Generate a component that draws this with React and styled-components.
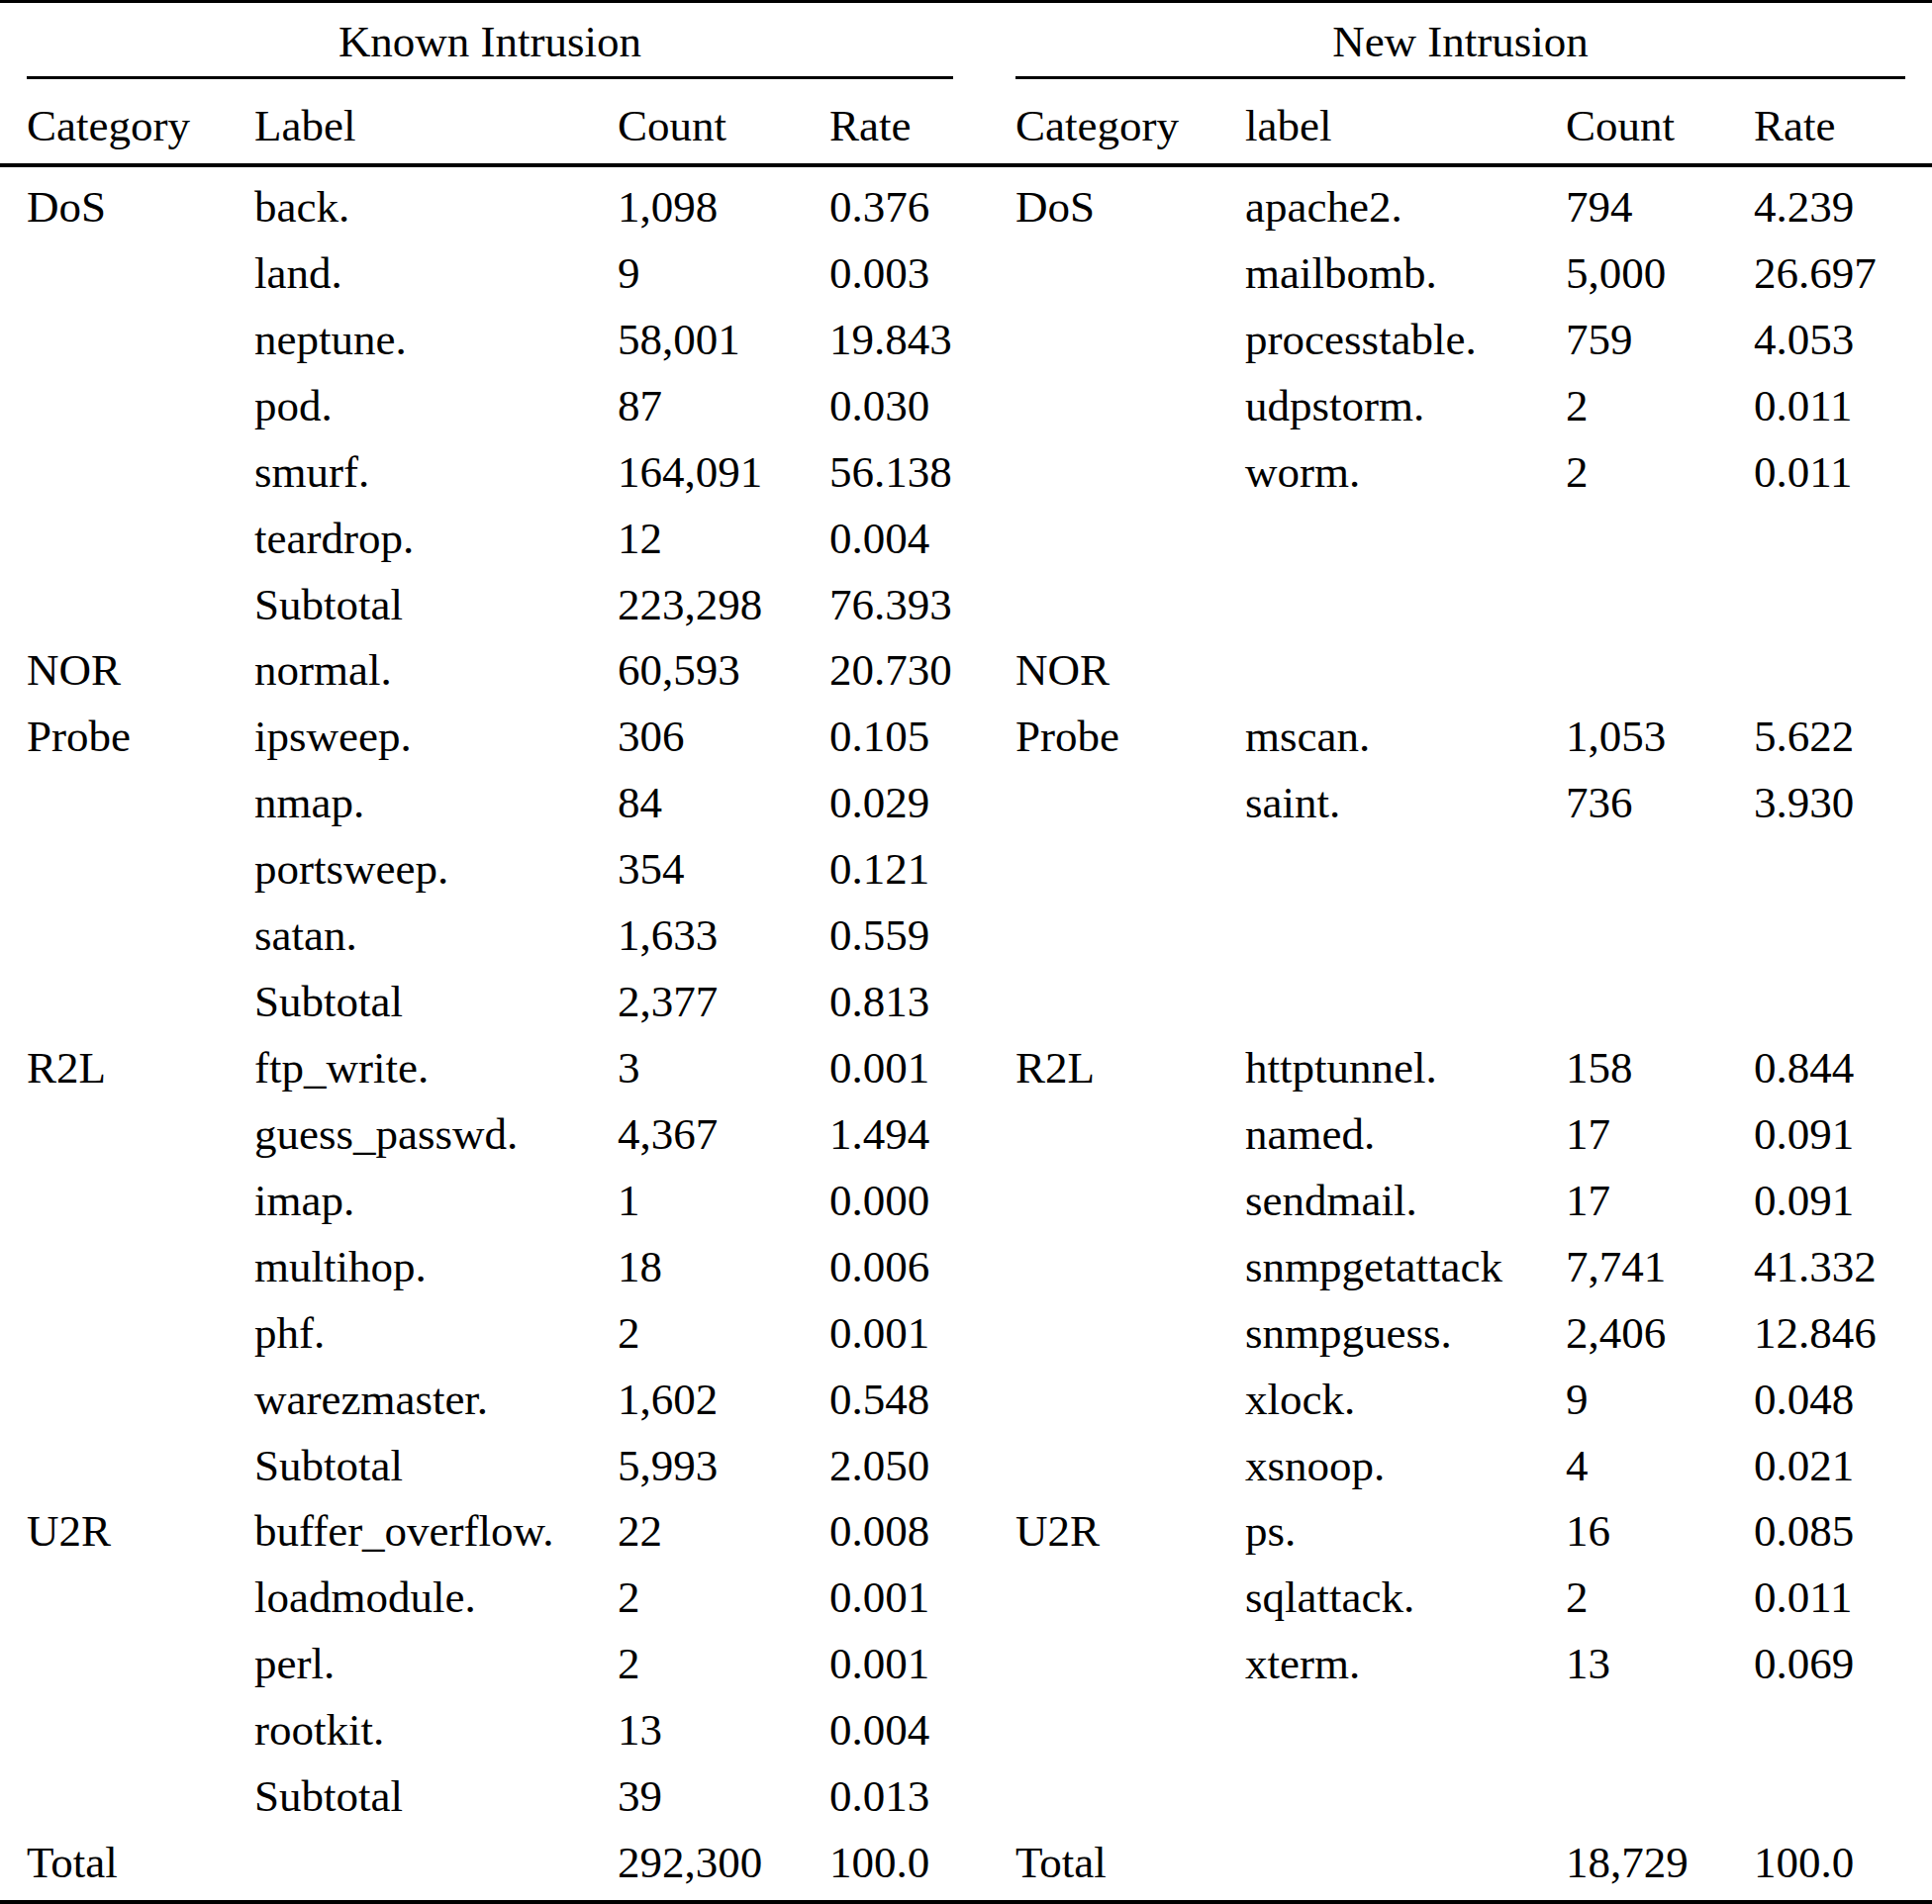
import React from "react";
import styled, { createGlobalStyle } from "styled-components";

const GlobalStyle = createGlobalStyle`
  html, body {
    margin: 0;
    padding: 0;
    background: #ffffff;
  }
  body {
    font-family: "Liberation Serif", "Times New Roman", serif;
    color: #000000;
  }
`;

const COLS = "230px 367px 214px 125px 63px 232px 324px 190px 153px";

const Table = styled.div`
  width: 1952px;
  box-sizing: border-box;
  border-top: 3px solid #000;
  border-bottom: 4px solid #000;
  font-family: "Liberation Serif", "Times New Roman", serif;
  font-size: 45px;
  color: #000;
`;

const Head = styled.div`
  padding: 14px 0 13px;
  border-bottom: 4px solid #000;
`;

const Row = styled.div`
  display: grid;
  grid-template-columns: ${COLS};
  padding: 0 27px;
  line-height: ${(p) => p.$lh || "50px"};
  margin-top: ${(p) => p.$mt || "0"};
`;

const GroupTitle = styled.div`
  grid-column: ${(p) => p.$start} / span 4;
  text-align: center;
  white-space: nowrap;
  padding-bottom: 10px;
  border-bottom: 3px solid #000;
`;

const Cell = styled.div`
  white-space: nowrap;
  grid-column: ${(p) => p.$col};
`;

const Body = styled.div`
  padding: 7px 0 4.1px;
`;

const left = [
  ["DoS", "back.", "1,098", "0.376"],
  ["", "land.", "9", "0.003"],
  ["", "neptune.", "58,001", "19.843"],
  ["", "pod.", "87", "0.030"],
  ["", "smurf.", "164,091", "56.138"],
  ["", "teardrop.", "12", "0.004"],
  ["", "Subtotal", "223,298", "76.393"],
  ["NOR", "normal.", "60,593", "20.730"],
  ["Probe", "ipsweep.", "306", "0.105"],
  ["", "nmap.", "84", "0.029"],
  ["", "portsweep.", "354", "0.121"],
  ["", "satan.", "1,633", "0.559"],
  ["", "Subtotal", "2,377", "0.813"],
  ["R2L", "ftp_write.", "3", "0.001"],
  ["", "guess_passwd.", "4,367", "1.494"],
  ["", "imap.", "1", "0.000"],
  ["", "multihop.", "18", "0.006"],
  ["", "phf.", "2", "0.001"],
  ["", "warezmaster.", "1,602", "0.548"],
  ["", "Subtotal", "5,993", "2.050"],
  ["U2R", "buffer_overflow.", "22", "0.008"],
  ["", "loadmodule.", "2", "0.001"],
  ["", "perl.", "2", "0.001"],
  ["", "rootkit.", "13", "0.004"],
  ["", "Subtotal", "39", "0.013"],
  ["Total", "", "292,300", "100.0"],
];

const right = [
  ["DoS", "apache2.", "794", "4.239"],
  ["", "mailbomb.", "5,000", "26.697"],
  ["", "processtable.", "759", "4.053"],
  ["", "udpstorm.", "2", "0.011"],
  ["", "worm.", "2", "0.011"],
  ["", "", "", ""],
  ["", "", "", ""],
  ["NOR", "", "", ""],
  ["Probe", "mscan.", "1,053", "5.622"],
  ["", "saint.", "736", "3.930"],
  ["", "", "", ""],
  ["", "", "", ""],
  ["", "", "", ""],
  ["R2L", "httptunnel.", "158", "0.844"],
  ["", "named.", "17", "0.091"],
  ["", "sendmail.", "17", "0.091"],
  ["", "snmpgetattack", "7,741", "41.332"],
  ["", "snmpguess.", "2,406", "12.846"],
  ["", "xlock.", "9", "0.048"],
  ["", "xsnoop.", "4", "0.021"],
  ["U2R", "ps.", "16", "0.085"],
  ["", "sqlattack.", "2", "0.011"],
  ["", "xterm.", "13", "0.069"],
  ["", "", "", ""],
  ["", "", "", ""],
  ["Total", "", "18,729", "100.0"],
];

const leftCols = [1, 2, 3, 4];
const rightCols = [6, 7, 8, 9];

export default function App() {
  return (
    <>
      <GlobalStyle />
      <Table>
        <Head>
          <Row>
            <GroupTitle $start={1}>Known Intrusion</GroupTitle>
            <GroupTitle $start={6}>New Intrusion</GroupTitle>
          </Row>
          <Row $mt="22px">
            <Cell $col={1}>Category</Cell>
            <Cell $col={2}>Label</Cell>
            <Cell $col={3}>Count</Cell>
            <Cell $col={4}>Rate</Cell>
            <Cell $col={6}>Category</Cell>
            <Cell $col={7}>label</Cell>
            <Cell $col={8}>Count</Cell>
            <Cell $col={9}>Rate</Cell>
          </Row>
        </Head>
        <Body>
          {left.map((l, i) => (
            <Row key={i} $lh="66.92px">
              {l.map((v, j) => (
                <Cell key={"l" + j} $col={leftCols[j]}>
                  {v}
                </Cell>
              ))}
              {right[i].map((v, j) => (
                <Cell key={"r" + j} $col={rightCols[j]}>
                  {v}
                </Cell>
              ))}
            </Row>
          ))}
        </Body>
      </Table>
    </>
  );
}
